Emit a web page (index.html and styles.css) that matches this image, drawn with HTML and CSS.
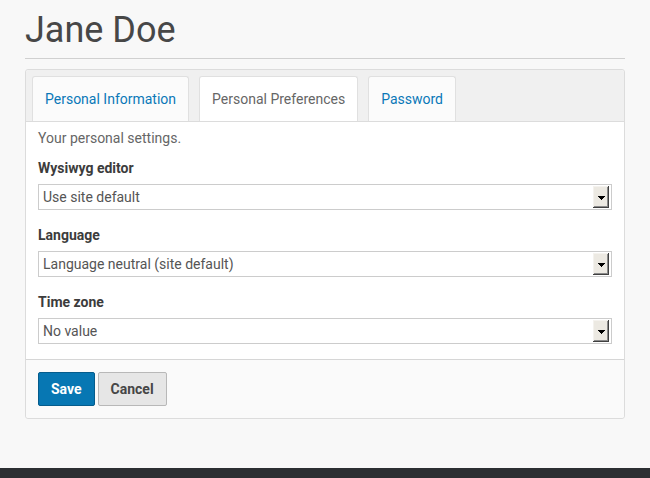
FILE: index.html
```html
<!DOCTYPE html>
<html lang="en">
<head>
<meta charset="utf-8">
<title>Jane Doe</title>
<link rel="stylesheet" href="styles.css">
</head>
<body>
<main class="page">
  <h1 class="page-title">Jane Doe</h1>
  <form class="card">
    <div class="tabs">
      <a class="tab" href="#">Personal Information</a>
      <a class="tab tab-active" href="#">Personal Preferences</a>
      <a class="tab" href="#">Password</a>
    </div>
    <div class="card-body">
      <p class="intro">Your personal settings.</p>
      <div class="field">
        <label class="field-label">Wysiwyg editor</label>
        <div class="select"><span class="select-value">Use site default</span><span class="select-btn"><svg width="7" height="4" viewBox="0 0 7 4"><path d="M0 0h7v1h-1v1h-1v1h-1v1h-1v-1h-1v-1h-1v-1h-1z" fill="#000"/></svg></span></div>
      </div>
      <div class="field">
        <label class="field-label">Language</label>
        <div class="select"><span class="select-value">Language neutral (site default)</span><span class="select-btn"><svg width="7" height="4" viewBox="0 0 7 4"><path d="M0 0h7v1h-1v1h-1v1h-1v1h-1v-1h-1v-1h-1v-1h-1z" fill="#000"/></svg></span></div>
      </div>
      <div class="field">
        <label class="field-label">Time zone</label>
        <div class="select"><span class="select-value">No value</span><span class="select-btn"><svg width="7" height="4" viewBox="0 0 7 4"><path d="M0 0h7v1h-1v1h-1v1h-1v1h-1v-1h-1v-1h-1v-1h-1z" fill="#000"/></svg></span></div>
      </div>
    </div>
    <div class="card-footer">
      <button type="button" class="btn btn-primary">Save</button>
      <button type="button" class="btn btn-default">Cancel</button>
    </div>
  </form>
</main>
<footer class="site-footer"></footer>
</body>
</html>
```
FILE: styles.css
```css
html, body {
  margin: 0;
  padding: 0;
}
body {
  background: #f8f8f8;
  font-family: Roboto, "Liberation Sans", Arial, sans-serif;
  font-size: 14px;
  color: #555;
  min-height: 478px;
  display: flex;
  flex-direction: column;
}
.page {
  padding: 0 25px;
  flex: 1;
}
.page-title {
  margin: 9px 0 0;
  padding-bottom: 7px;
  font-size: 36px;
  line-height: 42px;
  font-weight: 400;
  color: #474747;
  border-bottom: 1px solid #d0d0d0;
}
.card {
  margin-top: 10px;
  border: 1px solid #dcdcdc;
  border-radius: 3px;
  background: #fafafa;
}
.tabs {
  display: flex;
  gap: 10px;
  padding: 6px 6px 0;
  background: #f0f0f0;
  border-bottom: 1px solid #dcdcdc;
  border-radius: 3px 3px 0 0;
}
.tab {
  display: block;
  height: 44px;
  line-height: 44px;
  padding: 0 12px;
  border: 1px solid #e0e0e0;
  border-bottom: 0;
  border-radius: 3px 3px 0 0;
  background: #fbfbfb;
  color: #0a78b8;
  text-decoration: none;
  font-size: 14px;
}
.tab-active {
  background: #fff;
  color: #666;
}
.card-body {
  background: #fff;
  padding: 6px 12px 15px;
}
.intro {
  margin: 0;
  line-height: 20px;
  color: #666;
}
.field {
  margin-top: 10px;
}
.field + .field {
  margin-top: 15px;
}
.field-label {
  display: block;
  line-height: 20px;
  font-weight: 700;
  color: #3c3c3c;
  margin-bottom: 6px;
}
.select {
  display: flex;
  align-items: center;
  height: 24px;
  border: 1px solid #cccccc;
  background: #fff;
  padding-left: 4px;
}
.select-value {
  flex: 1;
  color: #555;
  line-height: 24px;
}
.select-btn {
  width: 16px;
  height: 22px;
  margin-right: 2px;
  display: flex;
  align-items: center;
  justify-content: center;
  background: #ece9e2;
  box-shadow: inset -1px -1px #404040, inset 1px 1px #f4f2ee, inset -2px -2px #8a8a8a;
}
.select-btn svg {
  display: block;
  margin-top: 1px;
}
.card-footer {
  display: flex;
  gap: 3px;
  padding: 12px 12px 12px;
  border-top: 1px solid #d6d6d6;
  background: #fafafa;
  border-radius: 0 0 3px 3px;
}
.btn {
  height: 34px;
  border-radius: 2px;
  font-family: Roboto, "Liberation Sans", Arial, sans-serif;
  font-size: 14px;
  font-weight: 700;
  padding: 0 12px;
  cursor: pointer;
}
.btn-primary {
  background: #0777b3;
  border: 1px solid #055c8c;
  color: #fff;
}
.btn-default {
  background: #e6e6e6;
  border: 1px solid #b8b8b8;
  color: #464646;
}
.site-footer {
  height: 10px;
  background: #2c2f32;
}
```
